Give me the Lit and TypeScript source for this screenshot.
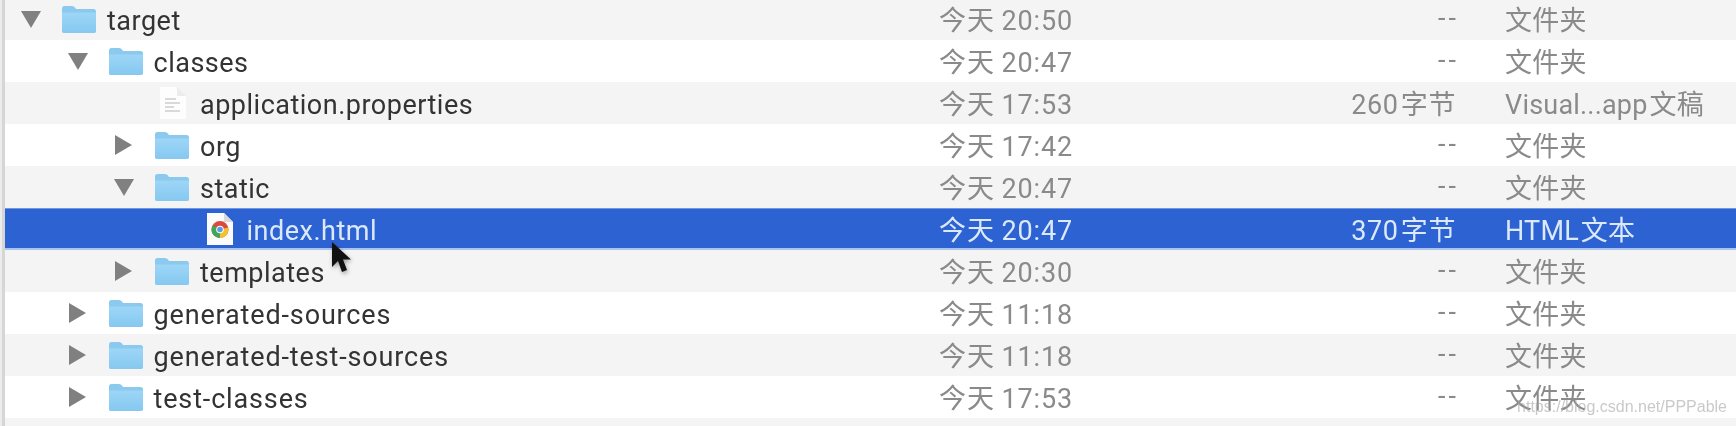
import { LitElement, html, css, svg } from "lit";
import { customElement } from "lit/decorators.js";

type Row = { name: string; level: number; arrow: "down" | "right" | ""; icon: "folder" | "text" | "chrome"; date: string; size: string; kind: string; sel?: boolean };

const rows: Row[] = [
  { name: "target", level: 0, arrow: "down", icon: "folder", date: "今天 20:50", size: "--", kind: "文件夹" },
  { name: "classes", level: 1, arrow: "down", icon: "folder", date: "今天 20:47", size: "--", kind: "文件夹" },
  { name: "application.properties", level: 2, arrow: "", icon: "text", date: "今天 17:53", size: "260 字节", kind: "Visual...app 文稿" },
  { name: "org", level: 2, arrow: "right", icon: "folder", date: "今天 17:42", size: "--", kind: "文件夹" },
  { name: "static", level: 2, arrow: "down", icon: "folder", date: "今天 20:47", size: "--", kind: "文件夹" },
  { name: "index.html", level: 3, arrow: "", icon: "chrome", date: "今天 20:47", size: "370 字节", kind: "HTML 文本", sel: true },
  { name: "templates", level: 2, arrow: "right", icon: "folder", date: "今天 20:30", size: "--", kind: "文件夹" },
  { name: "generated-sources", level: 1, arrow: "right", icon: "folder", date: "今天 11:18", size: "--", kind: "文件夹" },
  { name: "generated-test-sources", level: 1, arrow: "right", icon: "folder", date: "今天 11:18", size: "--", kind: "文件夹" },
  { name: "test-classes", level: 1, arrow: "right", icon: "folder", date: "今天 17:53", size: "--", kind: "文件夹" },
];

const folder = svg`<svg class="ico" width="36" height="30" viewBox="0 0 36 30">
  <defs><linearGradient id="fg" x1="0" y1="0" x2="0" y2="1"><stop offset="0" stop-color="#9dd6f7"/><stop offset="1" stop-color="#86c8f0"/></linearGradient></defs>
  <path d="M1 4.500Q1 2 3.500 2H11Q13 2 14 3.500L15 5H32.500Q35 5 35 7.500V26.500Q35 29 32.500 29H3.500Q1 29 1 26.500Z" fill="#8cc9ee"/>
  <path d="M1 8.500H35V26.500Q35 29 32.500 29H3.500Q1 29 1 26.500Z" fill="url(#fg)"/>
</svg>`;

const textDoc = svg`<svg class="ico" width="26" height="32" viewBox="0 0 26 32">
  <path d="M0 0H17L26 9V32H0Z" fill="#fdfdfd"/>
  <path d="M17 0V9H26Z" fill="#ececec"/>
  <path d="M5 12H16M5 16H20M5 20H14M5 24H20" stroke="#d9d9d9" stroke-width="1.800"/>
</svg>`;

const chromeDoc = svg`<svg class="ico" width="26" height="32" viewBox="0 0 26 32">
  <path d="M0 0H17L26 9V32H0Z" fill="#fbfbfb"/>
  <path d="M17 0V9H26Z" fill="#d9d9d9"/>
  <circle cx="13" cy="16.500" r="8.500" fill="#dc4a3d"/>
  <path d="M13 16.500L5.600 12.300A8.500 8.500 0 0 0 13 25Z" fill="#3ea75a"/>
  <path d="M13 16.500L21.300 14.500A8.500 8.500 0 0 1 13 25Z" fill="#f2c230"/>
  <circle cx="13" cy="16.500" r="3.800" fill="#fff"/>
  <circle cx="13" cy="16.500" r="2.800" fill="#5a9be8"/>
</svg>`;

const arrowDown = svg`<svg class="arrow" width="20" height="17" viewBox="0 0 20 17"><path d="M0 0H20L10 17Z" fill="#808080"/></svg>`;
const arrowRight = svg`<svg class="arrow right" width="17" height="20" viewBox="0 0 17 20"><path d="M0 0L17 10L0 20Z" fill="#808080"/></svg>`;

@customElement("app-root")
export class AppRoot extends LitElement {
  static styles = css`
    :host { display: block; width: 1736px; height: 426px; overflow: hidden; position: relative; background: #f4f4f5; filter: blur(0.6px); font-family: Roboto, "Noto Sans CJK SC", sans-serif; }
    .edge { position: absolute; left: 0; top: 0; bottom: 0; width: 5px; background: linear-gradient(90deg, #ececec 0 2px, #d6d6d6 2px 5px); }
    .list { margin-top: -2px; margin-left: 5px; display: flex; flex-direction: column; }
    .row { display: grid; grid-template-columns: 934px 200px 317px 1fr; height: 42px; align-items: center; font-size: 27px; background: #fff; color: #8a8a8a; }
    .row:nth-child(odd) { background: #f4f4f5; }
    .row.sel { background: #2d62d3; color: #dbe9fb; box-shadow: inset 0 1px 0 #6f97e4, inset 0 -2px 0 #a9c4f0; }
    .namecell { display: flex; align-items: center; height: 100%; color: #333; letter-spacing: 0.5px; }
    .namecell .hy { letter-spacing: 0.85px; }
    .namecell span { padding-top: 3px; }
    .sel .namecell { color: #dbe9fb; }
    .slot { display: flex; width: 42px; padding-left: 2px; box-sizing: border-box; }
    .arrow.right { margin-left: 1px; }
    .ico { flex: none; }
    .iconbox { width: 46px; display: flex; align-items: center; }
    .iconbox.doc { padding-left: 6px; width: 40px; }
    .date { letter-spacing: 0.9px; word-spacing: -1px; padding-bottom: 2px; }
    .size { text-align: right; letter-spacing: 0.6px; word-spacing: -5px; padding-bottom: 2px; }
    .size.dash { letter-spacing: 3px; margin-right: -3px; }
    .kind { padding-left: 49px; letter-spacing: 0.2px; word-spacing: -5px; white-space: nowrap; padding-bottom: 2px; }
    .mark { position: absolute; right: 9px; top: 398px; font: 16px "Liberation Sans", sans-serif; color: rgba(165,165,165,0.6); }
    .cursor { position: absolute; left: 330px; top: 241px; filter: drop-shadow(1px 2px 2px rgba(0,0,0,0.35)); }
  `;

  render() {
    return html`
      <div class="edge"></div>
      <div class="list">
        ${rows.map(r => html`
          <div class="row ${r.sel ? "sel" : ""}">
            <div class="namecell" style="padding-left:${14 + r.level * 46.5}px">
              <div class="slot">${r.arrow === "down" ? arrowDown : r.arrow === "right" ? arrowRight : ""}</div>
              <div class="iconbox ${r.icon === "folder" ? "" : "doc"}">${r.icon === "folder" ? folder : r.icon === "text" ? textDoc : chromeDoc}</div>
              <span class="${r.name.includes("-") ? "hy" : ""}">${r.name}</span>
            </div>
            <div class="date">${r.date}</div>
            <div class="size ${r.size === "--" ? "dash" : ""}">${r.size}</div>
            <div class="kind">${r.kind}</div>
          </div>`)}
        <div class="row"></div>
      </div>
      <svg class="cursor" width="26" height="36" viewBox="0 0 26 36">
        <path d="M2 1V26L8 20L12 31L17 29L13 18.500H21Z" fill="#111"/>
      </svg>
      <div class="mark">https://blog.csdn.net/PPPable</div>
    `;
  }
}
